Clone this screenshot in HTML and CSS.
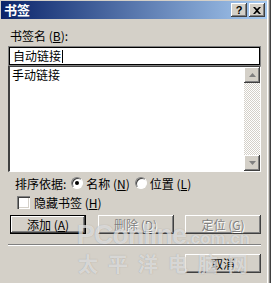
FILE: index.html
```html
<!DOCTYPE html>
<html lang="zh-CN">
<head>
    <meta charset="UTF-8">
    <title>书签</title>
    <link rel="stylesheet" href="styles.css">
</head>
<body>
    <div class="dialog">
        <div class="titlebar">
            <span class="title">书签</span>
            <div class="caption-btns">
                <span class="cap-btn help">?</span>
                <span class="cap-btn">
                    <svg width="8" height="7" viewBox="0 0 8 7"><path d="M0 0h2l2 2 2-2h2L5 3.5 8 7H6L4 5 2 7H0l3-3.5z" fill="#000"/></svg>
                </span>
            </div>
        </div>
        <div class="content">
            <div class="field-label">书签名 (<u>B</u>):</div>
            <div class="name-input">自动链接<span class="caret"></span></div>
            <div class="list">
                <div class="list-items">
                    <div class="item">手动链接</div>
                </div>
                <div class="scrollbar">
                    <span class="sb-btn">
                        <svg width="7" height="4" viewBox="0 0 7 4"><path d="M3.5 0L7 4H0z" fill="#808080"/></svg>
                    </span>
                    <span class="sb-track"></span>
                    <span class="sb-btn">
                        <svg width="7" height="4" viewBox="0 0 7 4"><path d="M0 0h7L3.5 4z" fill="#808080"/></svg>
                    </span>
                </div>
            </div>
            <div class="sort-row">
                <span>排序依据:</span>
                <span class="radio checked"></span>
                <span>名称 (<u>N</u>)</span>
                <span class="radio"></span>
                <span>位置 (<u>L</u>)</span>
            </div>
            <div class="check-row">
                <span class="checkbox"></span>
                <span>隐藏书签 (<u>H</u>)</span>
            </div>
            <div class="btn-row">
                <span class="btn default">添加 (<u>A</u>)</span>
                <span class="btn disabled">删除 (<u>D</u>)</span>
                <span class="btn disabled">定位 (<u>G</u>)</span>
            </div>
            <div class="sep"></div>
            <div class="btn-row end">
                <span class="btn">取消</span>
            </div>
        </div>
        <div class="watermark">
            <div class="wm-top"><span class="wm-big">PConline</span><span class="wm-small">.com.cn</span></div>
            <div class="wm-cn">太平洋电脑网</div>
        </div>
    </div>
</body>
</html>
```

FILE: styles.css
```css
* {
    margin: 0;
    padding: 0;
    box-sizing: border-box;
}

body {
    font-family: "Noto Sans CJK SC", "Liberation Sans", sans-serif;
    font-size: 12px;
    color: #000;
    background: #d4d0c8;
}

.dialog {
    position: relative;
    width: 271px;
    height: 283px;
    background: #d4d0c8;
    padding: 1px 4px 0 1px;
    box-shadow: inset -1px 0 #404040, inset -2px 0 #808080, inset -3px 0 #d4d0c8, inset -4px 0 #fff;
    overflow: hidden;
}

.titlebar {
    display: flex;
    align-items: center;
    justify-content: space-between;
    height: 18px;
    padding: 0 2px 0 3px;
    background: linear-gradient(90deg, #0a246a, #a6caf0);
}

.title {
    color: #fff;
    font-weight: bold;
    font-size: 13px;
    line-height: 18px;
}

.caption-btns {
    display: flex;
    gap: 2px;
}

.cap-btn {
    display: flex;
    align-items: center;
    justify-content: center;
    width: 16px;
    height: 14px;
    background: #d4d0c8;
    box-shadow: inset -1px -1px #404040, inset 1px 1px #fff, inset -2px -2px #808080;
    font-family: "Liberation Sans", sans-serif;
    font-weight: bold;
    font-size: 11px;
    line-height: 14px;
}

.content {
    display: flex;
    flex-direction: column;
    padding: 10px 6px 0 7px;
}

.field-label {
    height: 14px;
    line-height: 14px;
    padding-left: 2px;
    margin-bottom: 4px;
}

.name-input {
    display: flex;
    align-items: center;
    height: 18px;
    padding-left: 3px;
    background: #fff;
    border: 1px solid #000;
    box-shadow: 0 0 0 1px #808080;
    margin: 0 1px;
    line-height: 14px;
}

.caret {
    width: 1px;
    height: 13px;
    background: #000;
    margin-left: 1px;
}

.list {
    display: flex;
    height: 106px;
    margin-top: 1px;
    background: #fff;
    border-top: 1px solid #404040;
    border-left: 2px solid #404040;
    border-right: 1px solid #fff;
    border-bottom: 1px solid #fff;
    box-shadow: 0 -1px 0 #808080;
}

.list-items {
    flex: 1;
    padding: 1px 2px;
}

.item {
    line-height: 14px;
}

.scrollbar {
    display: flex;
    flex-direction: column;
    width: 16px;
}

.sb-btn {
    display: flex;
    align-items: center;
    justify-content: center;
    height: 16px;
    background: #d4d0c8;
    box-shadow: inset -1px -1px #404040, inset 1px 1px #fff, inset -2px -2px #808080;
}

.sb-track {
    flex: 1;
    background-color: #fff;
    background-image: repeating-conic-gradient(#d4d0c8 0 25%, #fff 0 50%);
    background-size: 2px 2px;
}

.sort-row {
    display: flex;
    align-items: center;
    height: 20px;
    margin-top: 1px;
    padding-left: 7px;
    gap: 3px;
}

.radio {
    width: 12px;
    height: 12px;
    border-radius: 50%;
    background: #fff;
    border: 1px solid;
    border-color: #808080 #fff #fff #808080;
    box-shadow: inset 1px 1px #404040;
    display: flex;
    align-items: center;
    justify-content: center;
    margin-left: 2px;
}

.radio.checked::after {
    content: "";
    width: 4px;
    height: 4px;
    border-radius: 50%;
    background: #000;
}

.check-row {
    display: flex;
    align-items: center;
    height: 19px;
    padding-left: 9px;
    gap: 4px;
}

.checkbox {
    width: 13px;
    height: 13px;
    background: #fff;
    box-shadow: inset 1px 1px #808080, inset 2px 2px #404040, inset -1px -1px #fff, inset -2px -2px #d4d0c8;
}

.btn-row {
    display: flex;
    justify-content: space-between;
    margin-top: 3px;
    padding: 0 0 0 2px;
}

.btn-row.end {
    justify-content: flex-end;
    margin-top: 8px;
}

.btn {
    display: flex;
    align-items: center;
    justify-content: center;
    width: 76px;
    height: 19px;
    background: #d4d0c8;
    box-shadow: inset -1px -1px #404040, inset 1px 1px #fff, inset -2px -2px #808080;
    line-height: 14px;
}

.btn.default {
    border: 1px solid #000;
}

.btn.disabled {
    color: #808080;
    text-shadow: 1px 1px #fff;
}

.sep {
    height: 2px;
    margin-top: 10px;
    border-top: 1px solid #808080;
    border-bottom: 1px solid #fff;
}

.watermark {
    position: absolute;
    left: 77px;
    top: 221px;
    width: 190px;
    white-space: nowrap;
    color: rgba(255, 255, 255, 0.6);
    text-shadow: 0 0 1px rgba(110, 110, 110, 0.55);
    pointer-events: none;
}

.wm-top {
    display: flex;
    align-items: baseline;
    font-family: "Liberation Sans", sans-serif;
    font-weight: bold;
    line-height: 28px;
}

.wm-big {
    font-size: 27px;
    letter-spacing: -1px;
}

.wm-small {
    font-size: 17px;
}

.wm-cn {
    font-family: "Noto Sans CJK SC", sans-serif;
    font-weight: bold;
    font-size: 20px;
    line-height: 22px;
    letter-spacing: 10px;
    margin-left: 1px;
}
```
